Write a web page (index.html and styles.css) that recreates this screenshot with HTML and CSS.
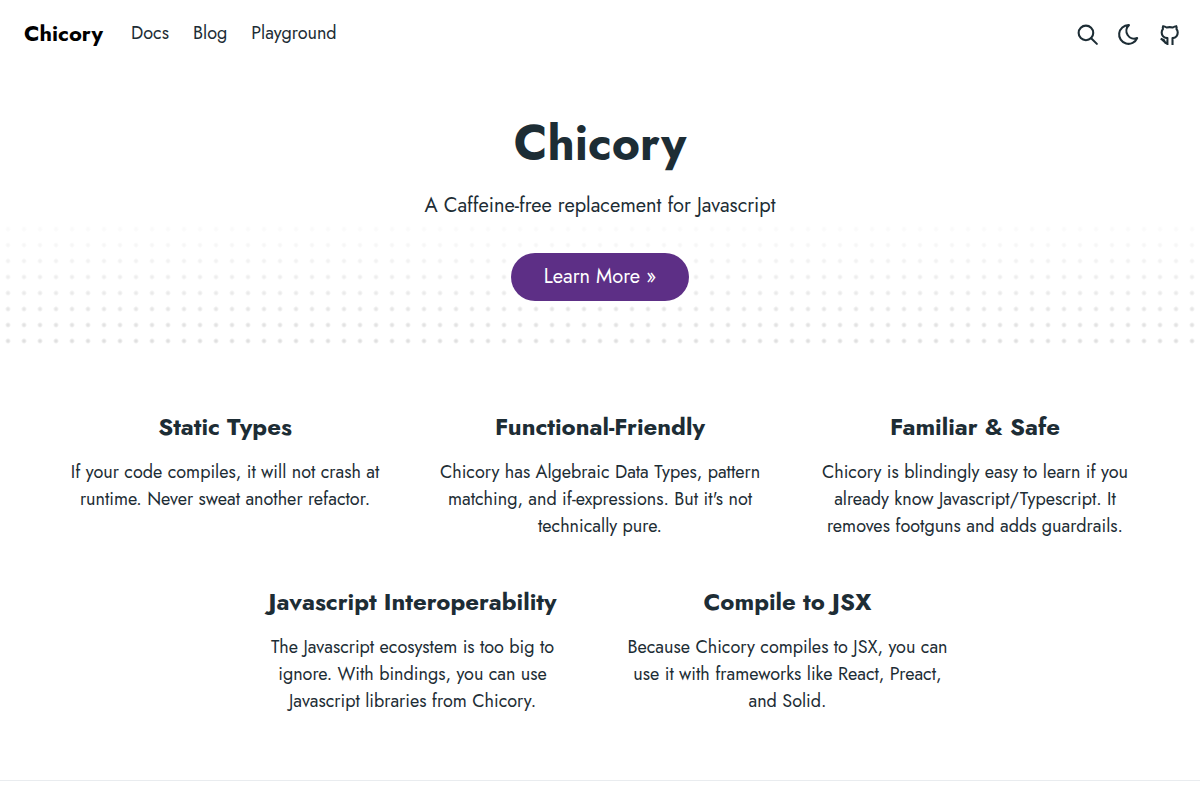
FILE: index.html
```html
<!DOCTYPE html>
<html lang="en">

<head>
    <meta charset="UTF-8">
    <meta name="viewport" content="width=device-width, initial-scale=1.0">
    <title>Chicory</title>
    <link rel="stylesheet" href="styles.css">
</head>

<body>
    <header class="navbar">
        <a href="#" class="brand">Chicory</a>
        <nav class="nav-links">
            <a href="#docs">Docs</a>
            <a href="#blog">Blog</a>
            <a href="#playground">Playground</a>
        </nav>
        <div class="nav-icons">
            <button type="button" aria-label="Search">
                <svg viewBox="0 0 24 24"><circle cx="10.500" cy="10.500" r="7"/><path d="M21 21l-5.500-5.500"/></svg>
            </button>
            <button type="button" aria-label="Toggle theme">
                <svg viewBox="0 0 24 24"><path d="M12 3c.132 0 .263 0 .393 0a7.500 7.500 0 0 0 7.920 12.446a9 9 0 1 1-8.313-12.454z"/></svg>
            </button>
            <a href="#github" aria-label="GitHub">
                <svg viewBox="0 0 24 24" stroke-linecap="butt"><path d="M10 22v-6.500C6.500 15 4.500 13 4.500 10c0-1.300.4-2.400 1.200-3.300-.3-.9-.2-1.800.2-2.700 1.200.1 2.300.6 3.300 1.300a12 12 0 0 1 6 0c1-.7 2.100-1.200 3.300-1.300.4.900.5 1.800.2 2.700.8.900 1.200 2 1.200 3.300 0 3-2 5-5 5.500V22"/><path d="M3.500 16l3 1.200L8 20h2M4 16l5 4.500"/></svg>
            </a>
        </div>
    </header>

    <main>
        <section class="hero">
            <h1>Chicory</h1>
            <p>A Caffeine-free replacement for Javascript</p>
            <a href="#docs" class="btn">Learn More »</a>
        </section>

        <section class="features">
            <div class="feature">
                <h2>Static Types</h2>
                <p>If your code compiles, it will not crash at runtime. Never sweat another refactor.</p>
            </div>
            <div class="feature">
                <h2>Functional-Friendly</h2>
                <p>Chicory has Algebraic Data Types, pattern matching, and if-expressions. But it's not technically pure.</p>
            </div>
            <div class="feature">
                <h2>Familiar &amp; Safe</h2>
                <p>Chicory is blindingly easy to learn if you already know Javascript/Typescript. It removes footguns and adds guardrails.</p>
            </div>
            <div class="feature">
                <h2>Javascript Interoperability</h2>
                <p>The Javascript ecosystem is too big to ignore. With bindings, you can use Javascript libraries from Chicory.</p>
            </div>
            <div class="feature">
                <h2>Compile to JSX</h2>
                <p>Because Chicory compiles to JSX, you can use it with frameworks like React, Preact, and Solid.</p>
            </div>
        </section>
    </main>

    <footer class="footer"></footer>
</body>

</html>
```
FILE: styles.css
```css
* {
    box-sizing: border-box;
}

body {
    margin: 0;
    font-family: Jost, Lato, sans-serif;
    font-size: 18px;
    line-height: 27px;
    color: #1d2d35;
    background: #fff;
}

a {
    color: inherit;
    text-decoration: none;
}

h1,
h2,
p {
    margin: 0;
}

/* Navbar */
.navbar {
    display: flex;
    align-items: center;
    height: 68px;
    padding: 0 18px 0 24px;
}

.brand {
    margin-right: 28px;
    padding-bottom: 2px;
    font-size: 22px;
    font-weight: 700;
    color: #000;
}

.nav-links {
    display: flex;
    gap: 24px;
    padding-bottom: 2px;
}

.nav-icons {
    display: flex;
    gap: 16px;
    margin-left: auto;
}

.nav-icons button,
.nav-icons a {
    display: flex;
    padding: 0;
    border: 0;
    background: none;
    color: inherit;
    cursor: pointer;
}

.nav-icons svg {
    width: 25px;
    height: 25px;
    fill: none;
    stroke: currentColor;
    stroke-width: 2;
    stroke-linejoin: round;
}

.nav-icons button svg {
    stroke-linecap: round;
}

/* Hero */
.hero {
    position: relative;
    padding: 46px 24px 48px;
    text-align: center;
}

/* Dot pattern fading out towards the top */
.hero::before {
    content: "";
    position: absolute;
    left: 0;
    right: 0;
    bottom: 0;
    z-index: -1;
    height: 128px;
    background: radial-gradient(circle, #e0e0e0 1px, transparent 3px) 0 0 / 16px 16px;
    -webkit-mask-image: linear-gradient(rgba(0, 0, 0, 0.1), #000 90%);
    mask-image: linear-gradient(rgba(0, 0, 0, 0.1), #000 90%);
}

.hero h1 {
    font-size: 48px;
    font-weight: 700;
    line-height: 60px;
}

.hero p {
    margin: 16px 0 31px;
    font-size: 20px;
    line-height: 32px;
}

.btn {
    display: inline-block;
    padding: 8px 33px;
    border-radius: 24px;
    font-size: 20px;
    line-height: 32px;
    color: #fff;
    background: #5d2f86;
}

/* Features */
.features {
    display: flex;
    flex-wrap: wrap;
    justify-content: center;
    max-width: 1125px;
    margin: 0 auto;
    padding: 62px 0 19px;
    text-align: center;
}

.feature {
    width: 33.33%;
    padding: 0 24px 46px;
}

.feature h2 {
    margin-bottom: 16px;
    font-size: 24px;
    font-weight: 700;
    line-height: 32px;
}

.footer {
    border-top: 1px solid #e9ecef;
}

@media (max-width: 768px) {
    .feature {
        width: 100%;
    }
}
```
